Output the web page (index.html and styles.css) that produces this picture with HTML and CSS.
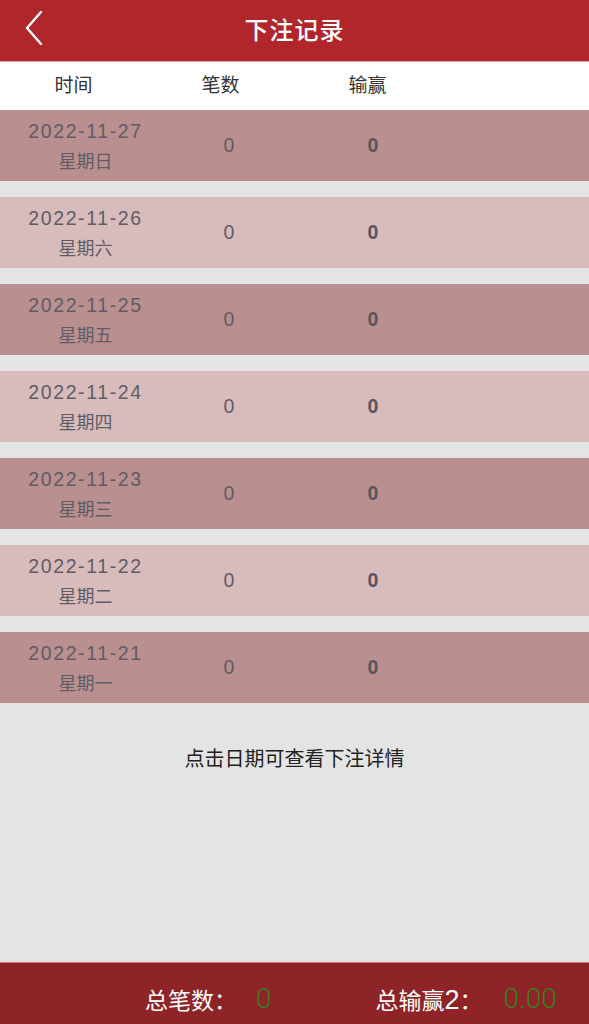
FILE: index.html
```html
<!DOCTYPE html>
<html lang="zh">
<head>
<meta charset="utf-8">
<link rel="stylesheet" href="styles.css">
</head>
<body>
<div class="page">
  <header class="topbar">
    <span class="back"><svg width="20" height="34" viewBox="0 0 20 34"><path d="M17 1 L3 17 L17 33" fill="none" stroke="#fff" stroke-width="2.4" stroke-linecap="round" stroke-linejoin="round"/></svg></span>
    <h1 class="title">下注记录</h1>
  </header>
  <div class="thead">
    <div class="c c1">时间</div>
    <div class="c c2">笔数</div>
    <div class="c c3">输赢</div>
  </div>
  <div class="list">
    <div class="row dark"><div class="d c1"><span class="date">2022-11-27</span><span>星期日</span></div><div class="d c2">0</div><div class="d c3 b">0</div></div>
    <div class="row light"><div class="d c1"><span class="date">2022-11-26</span><span>星期六</span></div><div class="d c2">0</div><div class="d c3 b">0</div></div>
    <div class="row dark"><div class="d c1"><span class="date">2022-11-25</span><span>星期五</span></div><div class="d c2">0</div><div class="d c3 b">0</div></div>
    <div class="row light"><div class="d c1"><span class="date">2022-11-24</span><span>星期四</span></div><div class="d c2">0</div><div class="d c3 b">0</div></div>
    <div class="row dark"><div class="d c1"><span class="date">2022-11-23</span><span>星期三</span></div><div class="d c2">0</div><div class="d c3 b">0</div></div>
    <div class="row light"><div class="d c1"><span class="date">2022-11-22</span><span>星期二</span></div><div class="d c2">0</div><div class="d c3 b">0</div></div>
    <div class="row dark"><div class="d c1"><span class="date">2022-11-21</span><span>星期一</span></div><div class="d c2">0</div><div class="d c3 b">0</div></div>
  </div>
  <p class="hint">点击日期可查看下注详情</p>
  <footer class="foot">
    <span class="lbl">总笔数：</span><span class="val v1">0</span>
    <span class="lbl l2">总输赢<span class="num">2</span>：</span><span class="val v2">0.00</span>
  </footer>
</div>
</body>
</html>
```

FILE: styles.css
```css
* { box-sizing: border-box; margin: 0; padding: 0; }
html, body { width: 589px; height: 1024px; overflow: hidden; }
body {
  font-family: "Noto Sans CJK SC", "Liberation Sans", sans-serif;
  background: #e4e4e4;
}
.page { height: 1024px; display: flex; flex-direction: column; }
.topbar {
  height: 62px;
  background: #b0262a;
  display: flex;
  align-items: center;
  justify-content: center;
  position: relative;
  border-bottom: 1px solid #d9a6a6;
}
.back { position: absolute; left: 24px; top: 11px; }
.title { color: #fff; font-size: 24px; font-weight: 500; letter-spacing: 1px; padding-bottom: 4px; }
.thead {
  height: 48px;
  background: #fff;
  display: flex;
  align-items: center;
  font-size: 19px;
  color: #333;
  padding-bottom: 6px;
}
.c { text-align: center; }
.c1 { width: 147px; }
.c2 { width: 147px; }
.c3 { width: 147px; }
.list { display: flex; flex-direction: column; gap: 16px; }
.row {
  height: 71px;
  display: flex;
  align-items: center;
  color: #5f5c66;
  font-size: 18px;
}
.row.dark { background: #b98f8f; }
.row.light { background: #d8bcbc; }
.d { text-align: center; }
.d.c1 { width: 171px; display: flex; flex-direction: column; line-height: 29px; }
.date { font-family: "Liberation Sans", sans-serif; font-size: 19.5px; letter-spacing: 1.6px; }
.d.c2, .d.c3 { font-family: "Liberation Sans", sans-serif; font-size: 19.5px; }
.d.c2 { width: 116px; }
.d.c3 { width: 172px; }
.d.b { font-weight: 700; color: #58555e; }
.hint {
  margin-top: 40px;
  text-align: center;
  font-size: 20px;
  color: #222;
  flex: 1;
}
.foot {
  height: 62px;
  background: #8e2428;
  border-top: 1px solid #c87878;
  display: flex;
  align-items: center;
  font-size: 23px;
  color: #fff;
  padding-left: 145px;
  padding-top: 10px;
}
.num { font-family: "Liberation Sans", sans-serif; font-size: 27px; font-weight: 300; }
.val { color: #3a7d1e; font-family: "Roboto", "Liberation Sans", sans-serif; font-size: 28px; font-weight: 300; }
.v1 { margin-left: 19px; }
.l2 { margin-left: 104px; }
.v2 { margin-left: 21px; }
```
